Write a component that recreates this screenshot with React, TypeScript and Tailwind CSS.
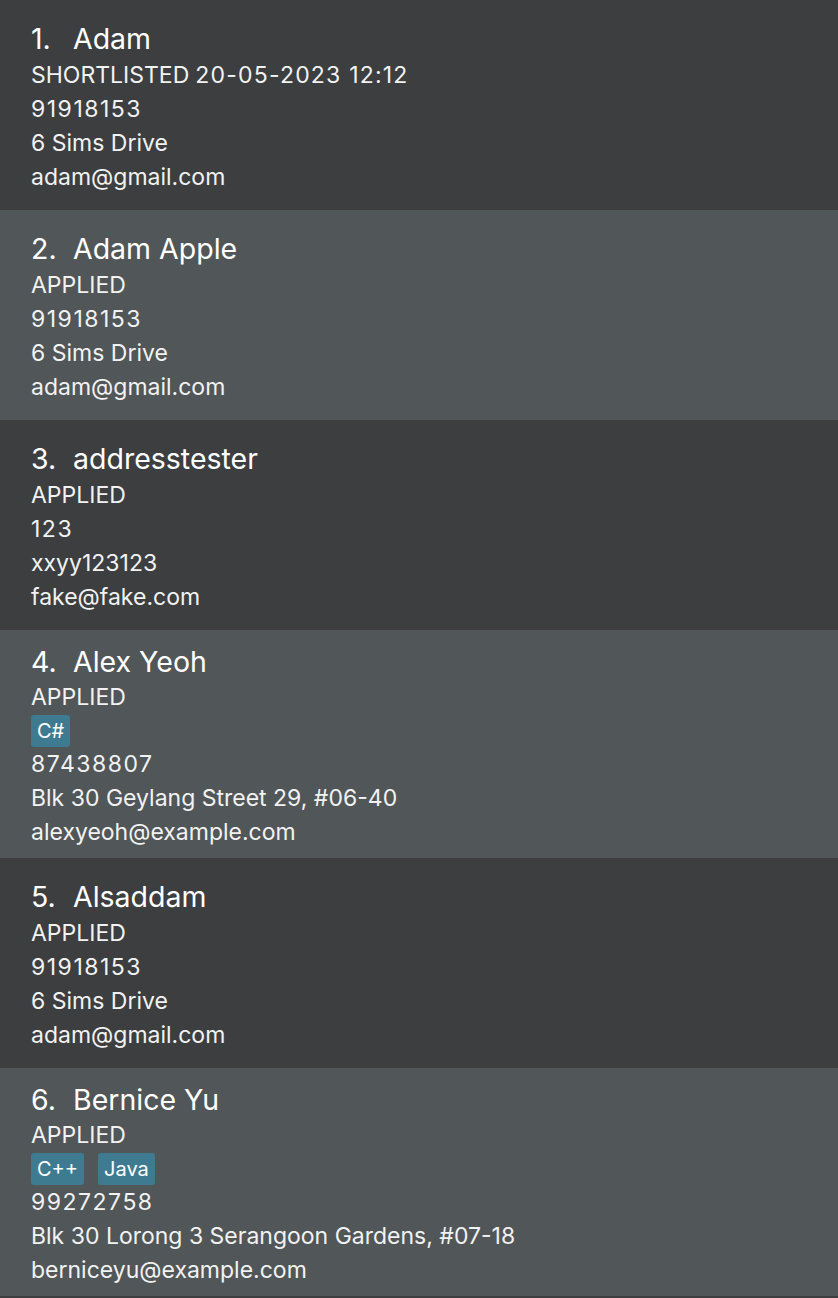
const applicants = [
  { name: "Adam", status: "SHORTLISTED", date: "20-05-2023 12:12", tags: [], phone: "91918153", address: "6 Sims Drive", email: "adam@gmail.com" },
  { name: "Adam Apple", status: "APPLIED", date: "", tags: [], phone: "91918153", address: "6 Sims Drive", email: "adam@gmail.com" },
  { name: "addresstester", status: "APPLIED", date: "", tags: [], phone: "123", address: "xxyy123123", email: "fake@fake.com" },
  { name: "Alex Yeoh", status: "APPLIED", date: "", tags: ["C#"], phone: "87438807", address: "Blk 30 Geylang Street 29, #06-40", email: "alexyeoh@example.com" },
  { name: "Alsaddam", status: "APPLIED", date: "", tags: [], phone: "91918153", address: "6 Sims Drive", email: "adam@gmail.com" },
  { name: "Bernice Yu", status: "APPLIED", date: "", tags: ["C++", "Java"], phone: "99272758", address: "Blk 30 Lorong 3 Serangoon Gardens, #07-18", email: "berniceyu@example.com" },
];

export default function App() {
  return (
    <div className="min-h-screen w-full bg-[#3c3e3f] font-['Inter','Liberation_Sans',sans-serif] text-[#f2f2f2]">
      {applicants.map((a, i) => {
        const hasTags = a.tags.length > 0;
        return (
          <div
            key={i}
            className={`pl-[31px] pr-4 ${i % 2 === 0 ? "bg-[#3c3e3f]" : "bg-[#515658]"} ${hasTags ? "pt-[13px] pb-[9px]" : "pt-[20px] pb-[16px]"}`}
          >
            {/* Name line */}
            <div className={`flex text-[28.5px] text-white ${hasTags ? "leading-[37px]" : "leading-[38px]"}`}>
              <span className="w-[42px]">{i + 1}.</span>
              <span>{a.name}</span>
            </div>
            <div className="text-[23px] leading-[34px]">
              {a.status}
              {a.date && <span className="ml-[6px] tracking-[1.2px]">{a.date}</span>}
            </div>
            {hasTags && (
              <div className="flex h-[33px] items-center gap-[14px]">
                {a.tags.map((t) => (
                  <span key={t} className="flex h-[32px] items-center rounded-[3px] bg-[#3e7b91] px-[6px] text-[20px] text-white">
                    {t}
                  </span>
                ))}
              </div>
            )}
            <div className="text-[23px] leading-[34px] tracking-[1.5px]">{a.phone}</div>
            <div className="text-[23px] leading-[34px]">{a.address}</div>
            <div className="text-[23px] leading-[34px]">{a.email}</div>
          </div>
        );
      })}
    </div>
  );
}
